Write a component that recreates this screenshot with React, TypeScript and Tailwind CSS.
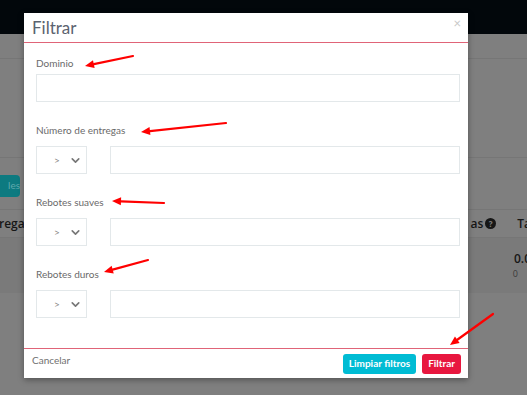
import { ChevronDown } from "lucide-react";

const fields = [
  { label: "Número de entregas" },
  { label: "Rebotes suaves" },
  { label: "Rebotes duros" },
];

function Arrow({ x1, y1, x2, y2 }: { x1: number; y1: number; x2: number; y2: number }) {
  const ang = Math.atan2(y2 - y1, x2 - x1);
  const len = 9;
  const w = 4;
  const bx = x2 - len * Math.cos(ang);
  const by = y2 - len * Math.sin(ang);
  const px = -Math.sin(ang) * w;
  const py = Math.cos(ang) * w;
  return (
    <g>
      <line x1={x1} y1={y1} x2={bx} y2={by} stroke="#f00" strokeWidth={2.2} strokeLinecap="round" />
      <polygon points={`${x2},${y2} ${bx + px},${by + py} ${bx - px},${by - py}`} fill="#f00" />
    </g>
  );
}

export default function App() {
  return (
    <div className="relative h-[395px] w-[527px] overflow-hidden bg-[#7f7f7f] font-['Lato',sans-serif]">
      {/* page behind the backdrop */}
      <div className="h-[34px] bg-[#02070b]" />
      <div className="h-[25px] border-b border-[#767676]" />
      <div className="h-[99px] border-b border-[#767676]" />
      <div className="flex h-[51px] items-center pt-[4px]">
        <div className="flex h-[22px] w-[20px] items-center justify-end overflow-hidden rounded-r-sm bg-[#0d7a80] text-[10px] text-[#5fa9ad]">
          les
        </div>
      </div>
      <div className="flex h-[29px] items-center justify-between border-y border-[#767676] font-['Open_Sans',sans-serif] text-[12px] font-semibold text-[#161616]">
        <span className="-ml-[1px]">regac</span>
        <span className="flex items-center gap-[3px]">
          <span className="-mr-[1px]">as</span>
          <span className="flex h-[11px] w-[11px] items-center justify-center rounded-full bg-[#161616] text-[8px] font-bold text-[#7f7f7f]">?</span>
          <span className="ml-[18px] -mr-[4px]">Ta</span>
        </span>
      </div>
      <div className="flex h-[55px] flex-col items-end justify-center bg-[#7a7a7a] pr-0 font-['Open_Sans',sans-serif]">
        <span className="-mr-[4px] text-[12px] font-semibold leading-[16px] text-[#161616]">0.0</span>
        <span className="mr-[9px] text-[9px] leading-[14px] text-[#3a3a3a]">0</span>
      </div>

      {/* modal */}
      <div className="absolute left-[24px] top-[13px] w-[444px] bg-white shadow-[0_2px_6px_rgba(0,0,0,0.35)]">
        <div className="flex h-[30px] items-center justify-between border-b border-[#e06478] pl-[8px] pr-[7px]">
          <span className="text-[17px] leading-none text-[#5b6370]">Filtrar</span>
          <span className="-mt-[8px] text-[13px] leading-none text-[#c8c8c8]">×</span>
        </div>
        <div className="pb-[30px] pl-[12px] pr-[8px] pt-[13px]">
          <div className="text-[10px] leading-[14px] text-[#6a6a6a]">Dominio</div>
          <div className="mt-[4px] h-[28px] border border-[#e3e8ea]" />
          {fields.map((f) => (
            <div key={f.label} className="mt-[21px]">
              <div className="text-[10px] leading-[14px] text-[#6a6a6a]">{f.label}</div>
              <div className="mt-[9px] flex gap-[23px]">
                <div className="flex h-[28px] w-[51px] items-center justify-between border border-[#e3e8ea] pl-[17px] pr-[4px]">
                  <span className="text-[10px] text-[#888]">&gt;</span>
                  <ChevronDown size={13} strokeWidth={3} color="#777" />
                </div>
                <div className="h-[28px] flex-1 border border-[#e3e8ea]" />
              </div>
            </div>
          ))}
        </div>
        <div className="flex h-[30px] items-center justify-between border-t border-[#e06478] pl-[8px] pr-[7px]">
          <span className="-mt-[6px] text-[10px] text-[#707070]">Cancelar</span>
          <div className="flex gap-[6px]">
            <button className="h-[20px] rounded-[3px] bg-[#00bcd4] px-[6px] text-[10px] font-bold text-white">
              Limpiar filtros
            </button>
            <button className="h-[20px] rounded-[3px] bg-[#e8173f] px-[6px] text-[10px] font-bold text-white">
              Filtrar
            </button>
          </div>
        </div>
      </div>

      {/* annotations */}
      <svg className="pointer-events-none absolute left-0 top-0" width={527} height={395}>
        <Arrow x1={133} y1={56} x2={85} y2={66} />
        <Arrow x1={226} y1={123} x2={141} y2={132} />
        <Arrow x1={164} y1={203} x2={112} y2={201} />
        <Arrow x1={148} y1={260} x2={104} y2={272} />
        <Arrow x1={493} y1={314} x2={450} y2={345} />
      </svg>
    </div>
  );
}
